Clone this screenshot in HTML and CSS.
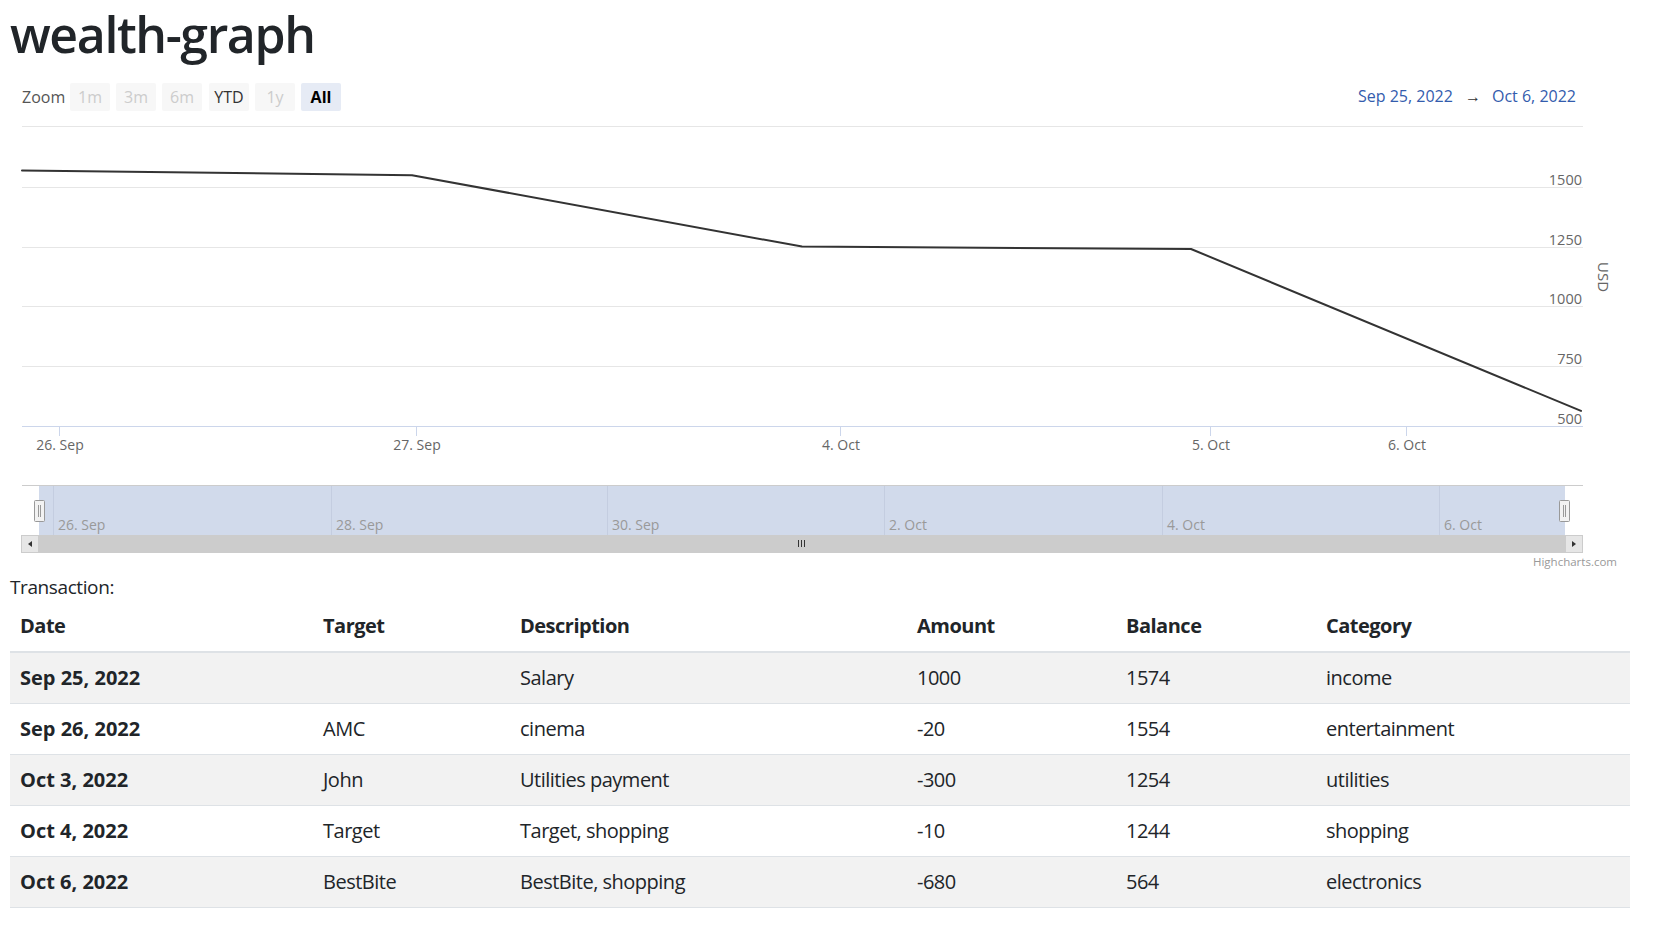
FILE: index.html
```html
<!DOCTYPE html>
<html lang="en">
<head>
<meta charset="utf-8">
<title>wealth-graph</title>
<link rel="stylesheet" href="styles.css">
</head>
<body>
<div class="page">
  <h1 class="title">wealth-graph</h1>
  <div class="chart">
    <svg class="chart-svg" width="1620" height="508" viewBox="0 0 1620 508" xmlns="http://www.w3.org/2000/svg">
      <g transform="translate(-10,-64)">
        <!-- range selector -->
        <text class="rs-label" x="22" y="103">Zoom</text>
        <g class="rs-btn disabled"><rect x="70" y="83" width="40" height="28" rx="2"/><text x="90" y="103">1m</text></g>
        <g class="rs-btn disabled"><rect x="116" y="83" width="40" height="28" rx="2"/><text x="136" y="103">3m</text></g>
        <g class="rs-btn disabled"><rect x="162" y="83" width="40" height="28" rx="2"/><text x="182" y="103">6m</text></g>
        <g class="rs-btn"><rect x="209" y="83" width="40" height="28" rx="2"/><text x="229" y="103">YTD</text></g>
        <g class="rs-btn disabled"><rect x="255" y="83" width="40" height="28" rx="2"/><text x="275" y="103">1y</text></g>
        <g class="rs-btn active"><rect x="301" y="83" width="40" height="28" rx="2"/><text x="321" y="103">All</text></g>

        <text class="rs-date" x="1358" y="102">Sep 25, 2022</text>
        <text class="rs-arrow" x="1473" y="102">→</text>
        <text class="rs-date" x="1492" y="102">Oct 6, 2022</text>

        <!-- grid -->
        <g class="grid">
          <line x1="22" y1="126.5" x2="1583" y2="126.5"/>
          <line x1="22" y1="187.5" x2="1583" y2="187.5"/>
          <line x1="22" y1="247.5" x2="1583" y2="247.5"/>
          <line x1="22" y1="306.5" x2="1583" y2="306.5"/>
          <line x1="22" y1="366.5" x2="1583" y2="366.5"/>
        </g>
        <line class="axis" x1="22" y1="426.5" x2="1583" y2="426.5"/>
        <g class="axis">
          <line x1="59.5" y1="426" x2="59.5" y2="436"/>
          <line x1="416.5" y1="426" x2="416.5" y2="436"/>
          <line x1="840.5" y1="426" x2="840.5" y2="436"/>
          <line x1="1210.5" y1="426" x2="1210.5" y2="436"/>
          <line x1="1406.5" y1="426" x2="1406.5" y2="436"/>
        </g>

        <g class="ylab">
          <text x="1582" y="185">1500</text>
          <text x="1582" y="245">1250</text>
          <text x="1582" y="304">1000</text>
          <text x="1582" y="364">750</text>
          <text x="1582" y="424">500</text>
        </g>
        <text class="ytitle" transform="translate(1598,277) rotate(90)">USD</text>

        <g class="xlab">
          <text x="60" y="450">26. Sep</text>
          <text x="417" y="450">27. Sep</text>
          <text x="841" y="450">4. Oct</text>
          <text x="1211" y="450">5. Oct</text>
          <text x="1407" y="450">6. Oct</text>
        </g>

        <path class="series" d="M22,170.4 L412,175.2 L802,246.6 L1191,249 L1581,410.9"/>

        <!-- navigator -->
        <rect class="nav-mask" x="39" y="485" width="1526" height="50"/>
        <g class="nav-grid">
          <line x1="53.5" y1="485" x2="53.5" y2="535"/>
          <line x1="331.5" y1="485" x2="331.5" y2="535"/>
          <line x1="607.5" y1="485" x2="607.5" y2="535"/>
          <line x1="884.5" y1="485" x2="884.5" y2="535"/>
          <line x1="1162.5" y1="485" x2="1162.5" y2="535"/>
          <line x1="1439.5" y1="485" x2="1439.5" y2="535"/>
        </g>
        <g class="nav-lab">
          <text x="58" y="530">26. Sep</text>
          <text x="336" y="530">28. Sep</text>
          <text x="612" y="530">30. Sep</text>
          <text x="889" y="530">2. Oct</text>
          <text x="1167" y="530">4. Oct</text>
          <text x="1444" y="530">6. Oct</text>
        </g>
        <line class="nav-outline" x1="22" y1="485.5" x2="1583" y2="485.5"/>

        <g class="handle">
          <rect x="34.5" y="500.5" width="10" height="21" rx="1"/>
          <line x1="38.5" y1="505" x2="38.5" y2="517"/>
          <line x1="40.5" y1="505" x2="40.5" y2="517"/>
        </g>
        <g class="handle">
          <rect x="1559.5" y="500.5" width="10" height="21" rx="1"/>
          <line x1="1563.5" y1="505" x2="1563.5" y2="517"/>
          <line x1="1565.5" y1="505" x2="1565.5" y2="517"/>
        </g>

        <!-- scrollbar -->
        <rect class="sb-track" x="21" y="535" width="1562" height="18"/>
        <rect class="sb-bar" x="39" y="535" width="1526" height="18"/>
        <g class="sb-grip">
          <line x1="798.5" y1="540" x2="798.5" y2="547"/>
          <line x1="801.5" y1="540" x2="801.5" y2="547"/>
          <line x1="804.5" y1="540" x2="804.5" y2="547"/>
        </g>
        <rect class="sb-btn" x="21.5" y="535.5" width="17" height="17"/>
        <path class="sb-arrow" d="M32,541 L28,544 L32,547 Z"/>
        <rect class="sb-btn" x="1565.5" y="535.5" width="17" height="17"/>
        <path class="sb-arrow" d="M1572,541 L1576,544 L1572,547 Z"/>

        <text class="credits" x="1617" y="566">Highcharts.com</text>
      </g>
    </svg>
  </div>

  <p class="caption">Transaction:</p>

  <table class="tx">
    <colgroup>
      <col class="c-date">
      <col class="c-target">
      <col class="c-desc">
      <col class="c-amount">
      <col class="c-balance">
      <col class="c-cat">
    </colgroup>
    <thead>
      <tr><th>Date</th><th>Target</th><th>Description</th><th>Amount</th><th>Balance</th><th>Category</th></tr>
    </thead>
    <tbody>
      <tr><th>Sep 25, 2022</th><td></td><td>Salary</td><td>1000</td><td>1574</td><td>income</td></tr>
      <tr><th>Sep 26, 2022</th><td>AMC</td><td>cinema</td><td>-20</td><td>1554</td><td>entertainment</td></tr>
      <tr><th>Oct 3, 2022</th><td>John</td><td>Utilities payment</td><td>-300</td><td>1254</td><td>utilities</td></tr>
      <tr><th>Oct 4, 2022</th><td>Target</td><td>Target, shopping</td><td>-10</td><td>1244</td><td>shopping</td></tr>
      <tr><th>Oct 6, 2022</th><td>BestBite</td><td>BestBite, shopping</td><td>-680</td><td>564</td><td>electronics</td></tr>
    </tbody>
  </table>
</div>
</body>
</html>
```

FILE: styles.css
```css
* { box-sizing: border-box; }

html, body {
  margin: 0;
  padding: 0;
  background: #fff;
}

body {
  font-family: "Open Sans", "Noto Sans", sans-serif;
  color: #212529;
}

.page {
  padding: 0 26px 0 10px;
}

.title {
  margin: 0;
  padding-top: 4px;
  font-size: 50px;
  font-weight: 600;
  line-height: 60px;
  color: #212529;
  letter-spacing: -1.4px;
}

.chart {
  height: 508px;
}

.chart-svg {
  display: block;
  font-family: "Open Sans", "Noto Sans", sans-serif;
}

.rs-label {
  font-size: 16px;
  fill: #555;
}

.rs-btn rect {
  fill: #f7f7f7;
}

.rs-btn text {
  font-size: 16px;
  fill: #333;
  text-anchor: middle;
}

.rs-btn.disabled text {
  fill: #ccc;
}

.rs-btn.active rect {
  fill: #e6ebf5;
}

.rs-btn.active text {
  fill: #000;
  font-weight: 700;
}

.rs-date {
  font-size: 16px;
  fill: #335cad;
}

.rs-arrow {
  font-size: 16px;
  fill: #333;
  text-anchor: middle;
}

.grid line {
  stroke: #e6e6e6;
  stroke-width: 1;
}

.axis, .axis line {
  stroke: #ccd6eb;
  stroke-width: 1;
}

.ylab text {
  font-size: 14.5px;
  fill: #666;
  text-anchor: end;
}

.ytitle {
  font-size: 15px;
  fill: #666;
  text-anchor: middle;
}

.xlab text {
  font-size: 14px;
  fill: #666;
  text-anchor: middle;
}

.series {
  fill: none;
  stroke: #333;
  stroke-width: 2;
  stroke-linejoin: round;
  stroke-linecap: round;
}

.nav-mask {
  fill: #d1daeb;
}

.nav-grid line {
  stroke: #c4cde0;
  stroke-width: 1;
}

.nav-lab text {
  font-size: 14px;
  fill: #999;
}

.nav-outline {
  stroke: #ccc;
  stroke-width: 1;
}

.handle rect {
  fill: #f2f2f2;
  stroke: #999;
  stroke-width: 1;
}

.handle line {
  stroke: #999;
  stroke-width: 1;
}

.sb-track {
  fill: #f2f2f2;
}

.sb-bar {
  fill: #ccc;
}

.sb-grip line {
  stroke: #333;
  stroke-width: 1;
}

.sb-btn {
  fill: #e6e6e6;
  stroke: #ccc;
  stroke-width: 1;
}

.sb-arrow {
  fill: #333;
}

.credits {
  font-size: 11.5px;
  fill: #999;
  text-anchor: end;
}

.caption {
  margin: 0;
  font-size: 19px;
  line-height: 30px;
  letter-spacing: -0.4px;
  color: #212529;
}

.tx {
  width: 100%;
  border-collapse: collapse;
  table-layout: fixed;
  font-size: 20px;
  line-height: 30px;
  margin-top: -1px;
}

.c-date { width: 303px; }
.c-target { width: 197px; }
.c-desc { width: 397px; }
.c-amount { width: 209px; }
.c-balance { width: 200px; }
.c-cat { width: 314px; }

.tx th,
.tx td {
  padding: 10px;
  text-align: left;
  vertical-align: top;
  white-space: nowrap;
}

.tx th {
  font-weight: 700;
}

.tx thead th {
  letter-spacing: -0.5px;
}

.tx tbody th {
  letter-spacing: 0;
}

.tx td {
  font-weight: 400;
  letter-spacing: -0.5px;
}

.tx thead th {
  border-bottom: 2px solid #dee2e6;
}

.tx tbody th,
.tx tbody td {
  border-bottom: 1px solid #dee2e6;
}

.tx tbody tr:nth-child(odd) {
  background: #f2f2f2;
}
```
